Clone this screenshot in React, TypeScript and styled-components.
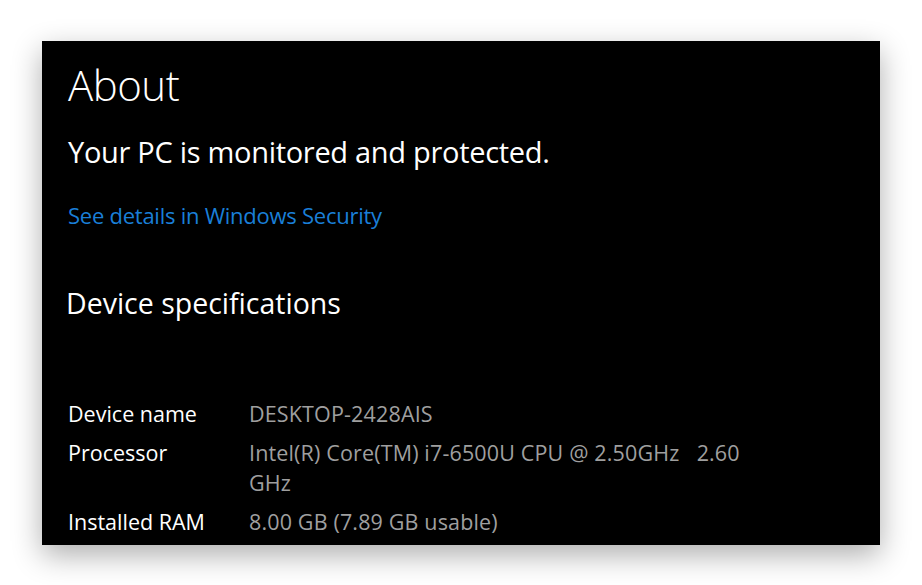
import { Fragment } from 'react'
import styled, { createGlobalStyle } from 'styled-components'

const GlobalStyle = createGlobalStyle`
  html, body {
    margin: 0;
    padding: 0;
    background: #ffffff;
  }
  body {
    font-family: 'Open Sans', 'Noto Sans', sans-serif;
  }
`

const Page = styled.div`
  width: 922px;
  height: 585px;
  padding: 41px 0 0 42px;
  box-sizing: border-box;
`

const Window = styled.div`
  width: 838px;
  height: 504px;
  background: #000000;
  box-shadow: 0 10px 28px rgba(0, 0, 0, 0.32);
  padding: 0 0 0 26px;
  box-sizing: border-box;
  display: flex;
  flex-direction: column;
  color: #ffffff;
  overflow: hidden;
`

const Title = styled.h1`
  margin: 16px 0 0;
  font-size: 42px;
  font-weight: 300;
  line-height: 56px;
  letter-spacing: -0.5px;
`

const Status = styled.div`
  margin-top: 20px;
  font-size: 29px;
  font-weight: 400;
  line-height: 38px;
  letter-spacing: -0.3px;
`

const Link = styled.a`
  margin-top: 29px;
  font-size: 22px;
  line-height: 30px;
  color: #1a7fd8;
  text-decoration: none;
  letter-spacing: -0.25px;
  align-self: flex-start;
`

const Section = styled.h2`
  margin: 55px 0 0 -2px;
  font-size: 28.5px;
  font-weight: 400;
  line-height: 36px;
`

const Specs = styled.div`
  margin-top: 78px;
  display: grid;
  grid-template-columns: 181px 510px;
  row-gap: 9px;
  font-size: 21.5px;
  line-height: 30px;
`

const Label = styled.div`
  color: #ffffff;
`

const Value = styled.div`
  color: #9f9f9f;
  white-space: pre-wrap;
  letter-spacing: 0.15px;
`

const specs = [
  { label: 'Device name', value: 'DESKTOP-2428AIS' },
  { label: 'Processor', value: 'Intel(R) Core(TM) i7-6500U CPU @ 2.50GHz   2.60 GHz' },
  { label: 'Installed RAM', value: '8.00 GB (7.89 GB usable)' },
]

const App = () => {
  return (
    <Page>
      <GlobalStyle />
      <Window>
        <Title>About</Title>
        <Status>Your PC is monitored and protected.</Status>
        <Link href="#">See details in Windows Security</Link>
        <Section>Device specifications</Section>
        <Specs>
          {specs.map((s) => (
            <Fragment key={s.label}>
              <Label>{s.label}</Label>
              <Value>{s.value}</Value>
            </Fragment>
          ))}
        </Specs>
      </Window>
    </Page>
  )
}

export default App
